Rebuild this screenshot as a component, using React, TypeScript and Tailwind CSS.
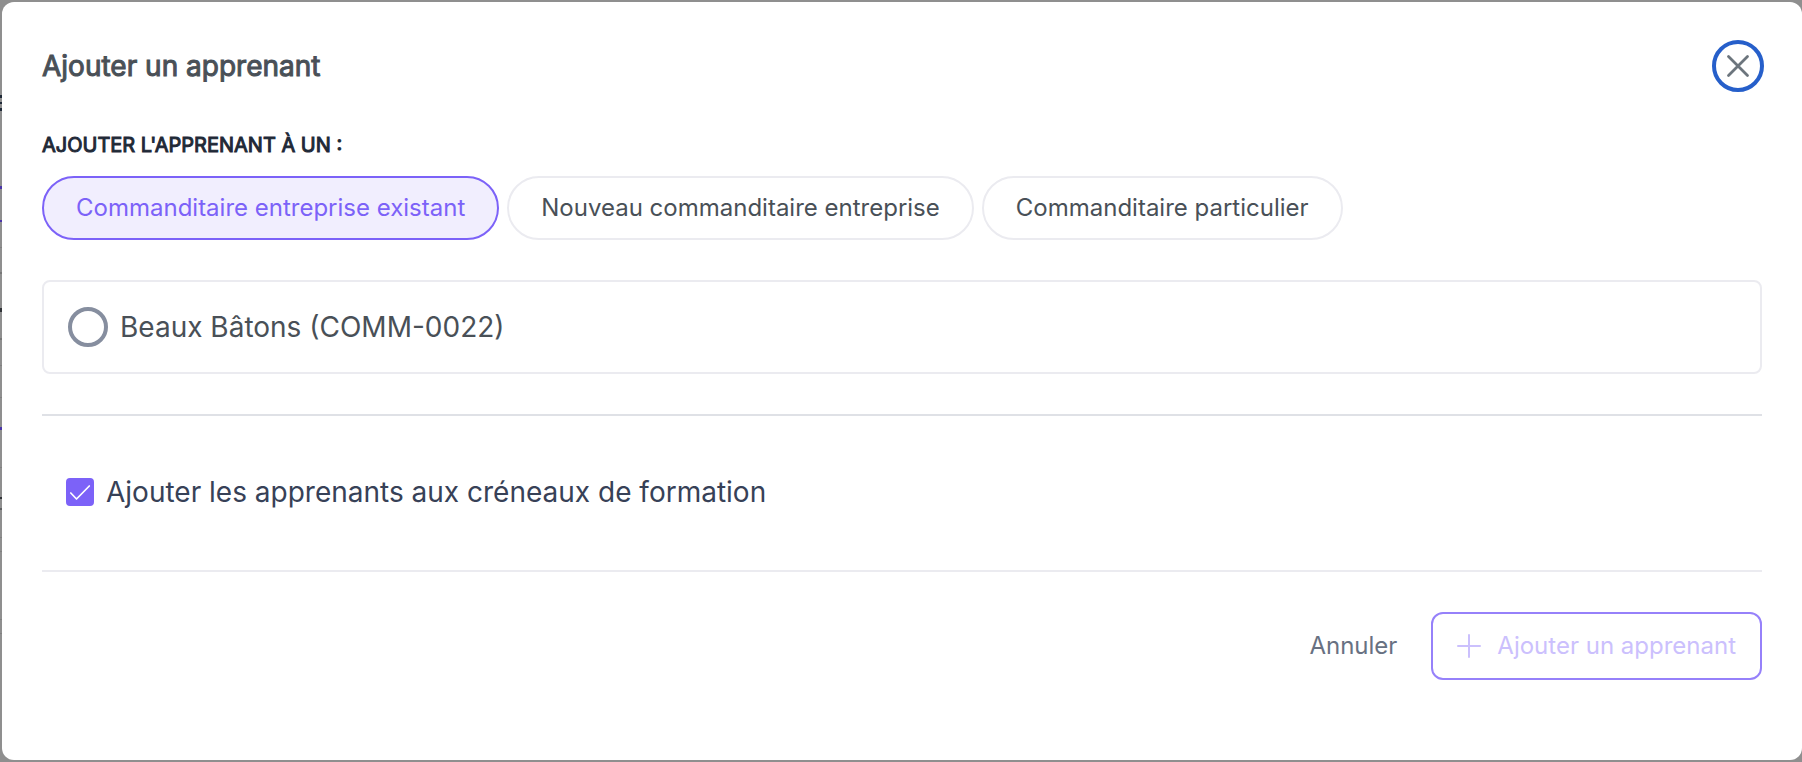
import { useState } from 'react';

const SPONSOR_TYPES = [
  'Commanditaire entreprise existant',
  'Nouveau commanditaire entreprise',
  'Commanditaire particulier',
];

// Edges of the page that stay visible behind the dialog
const PAGE_EDGES = [
  { y: 95, h: 3, color: '#1f2937' },
  { y: 102, h: 2, color: '#1f2937' },
  { y: 108, h: 3, color: '#1f2937' },
  { y: 186, h: 3, color: '#4a35a8' },
  { y: 220, h: 2, color: '#4a35a8' },
  { y: 247, h: 1, color: '#808080' },
  { y: 272, h: 2, color: '#777777' },
  { y: 308, h: 4, color: '#303338' },
  { y: 338, h: 2, color: '#777777' },
  { y: 365, h: 1, color: '#808080' },
  { y: 397, h: 1, color: '#808080' },
  { y: 427, h: 3, color: '#4a35a8' },
  { y: 467, h: 1, color: '#808080' },
  { y: 497, h: 2, color: '#303338' },
  { y: 508, h: 2, color: '#5f6062' },
  { y: 537, h: 1, color: '#808080' },
  { y: 551, h: 1, color: '#808080' },
  { y: 619, h: 1, color: '#808080' },
  { y: 633, h: 1, color: '#808080' },
];

function Backdrop() {
  return (
    <svg className="absolute left-0 top-0 h-full w-[2px]" aria-hidden="true">
      {PAGE_EDGES.map((edge) => (
        <rect key={edge.y} x="0" y={edge.y} width="2" height={edge.h} fill={edge.color} />
      ))}
    </svg>
  );
}

export default function App() {
  const [type, setType] = useState(SPONSOR_TYPES[0]);
  const [sponsor, setSponsor] = useState('');
  const [addToSlots, setAddToSlots] = useState(true);

  return (
    <div className="relative min-h-screen bg-[#8f8f8f] py-[2px] pl-[2px] font-['Inter',sans-serif]">
      <Backdrop />
      <div
        role="dialog"
        aria-labelledby="dialog-title"
        className="relative rounded-xl bg-white px-10 pt-10 pb-20"
      >
        <header className="flex items-center justify-between">
          <h2 id="dialog-title" className="text-[28px] leading-9 text-[#495057] [-webkit-text-stroke:1px]">
            Ajouter un apprenant
          </h2>
          <button
            type="button"
            aria-label="Fermer"
            className="-mx-[2px] -my-[2px] flex size-[52px] items-center justify-center rounded-full border-4 border-[#265fca] text-[#6c757d]"
          >
            <svg className="size-6" viewBox="0 0 24 24" fill="none" stroke="currentColor" strokeWidth="2.8" strokeLinecap="round">
              <path d="M2.5 2.5 21.5 21.5M21.5 2.5 2.5 21.5" />
            </svg>
          </button>
        </header>

        <fieldset className="mt-10">
          <legend className="text-xl leading-[30px] text-[#1f2937] uppercase [-webkit-text-stroke:1px]">
            Ajouter l'apprenant à un :
          </legend>
          <div className="mt-4 flex flex-wrap gap-2">
            {SPONSOR_TYPES.map((label) => (
              <button
                key={label}
                type="button"
                aria-pressed={type === label}
                onClick={() => setType(label)}
                className={`h-16 rounded-full border-2 px-8 text-2xl ${
                  type === label
                    ? 'border-[#7c62f8] bg-[#f1eefe] text-[#7c62f8]'
                    : 'border-[#ebebf0] bg-white text-[#495057]'
                }`}
              >
                {label}
              </button>
            ))}
          </div>
        </fieldset>

        <label className="mt-10 flex items-center gap-3 rounded-lg border-2 border-[#ebebf0] px-6 py-[25px] text-[28px] leading-10 text-[#495057]">
          <input
            type="radio"
            name="sponsor"
            value="COMM-0022"
            checked={sponsor === 'COMM-0022'}
            onChange={(e) => setSponsor(e.target.value)}
            className="size-10 appearance-none rounded-full border-4 border-[#868e9f] checked:border-[12px] checked:border-[#7c62f8]"
          />
          Beaux Bâtons (COMM-0022)
        </label>

        <hr className="mt-10 border-t-2 border-[#dfe1e6]" />

        <label className="mt-14 ml-6 flex items-center gap-3 text-[28px] leading-10 text-[#374157]">
          <span className="grid size-7">
            <input
              type="checkbox"
              checked={addToSlots}
              onChange={(e) => setAddToSlots(e.target.checked)}
              className="col-start-1 row-start-1 size-7 appearance-none rounded border-2 border-[#7c62f8] checked:bg-[#7c62f8]"
            />
            {addToSlots && (
              <svg className="pointer-events-none col-start-1 row-start-1 size-7" viewBox="0 0 28 28" fill="none" stroke="white" strokeWidth="1.7" strokeLinecap="round" strokeLinejoin="round">
                <path d="M4.8 15 10.5 21 23.3 8" />
              </svg>
            )}
          </span>
          Ajouter les apprenants aux créneaux de formation
        </label>

        <hr className="mt-[58px] border-t-2 border-[#ebebf0]" />

        <footer className="mt-10 flex items-center justify-end gap-[34px] text-2xl">
          <button type="button" className="text-[#687182]">
            Annuler
          </button>
          <button
            type="button"
            disabled
            className="flex h-[68px] items-center gap-4 rounded-xl border-2 border-[#9681fa] px-6 text-[#cbc0fd]"
          >
            <svg className="size-6" viewBox="0 0 24 24" fill="none" stroke="currentColor" strokeWidth="2" strokeLinecap="round">
              <path d="M12 1v22M1 12h22" />
            </svg>
            Ajouter un apprenant
          </button>
        </footer>
      </div>
    </div>
  );
}
